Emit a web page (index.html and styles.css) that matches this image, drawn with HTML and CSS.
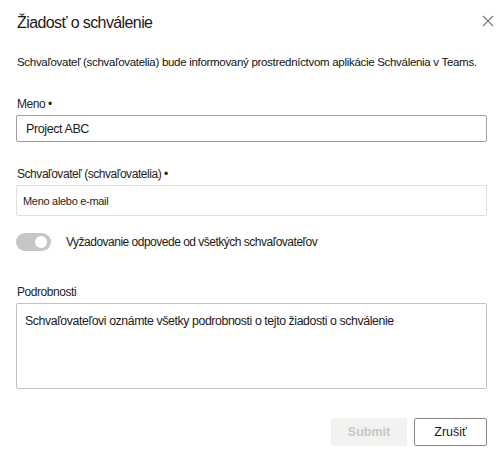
FILE: index.html
```html
<!DOCTYPE html>
<html lang="sk">
<head>
<meta charset="utf-8">
<link rel="stylesheet" href="styles.css">
</head>
<body>
<div class="dialog">
  <div class="header">
    <h1 class="title">Žiadosť o schválenie</h1>
    <button class="close" aria-label="Zavrieť">
      <svg width="12" height="12" viewBox="0 0 12 12"><path d="M1 1 L11 11 M11 1 L1 11" stroke="#777" stroke-width="1.1" fill="none"/></svg>
    </button>
  </div>
  <p class="desc">Schvaľovateľ (schvaľovatelia) bude informovaný prostredníctvom aplikácie Schválenia v Teams.</p>

  <div class="field field-name">
    <label class="label">Meno •</label>
    <div class="input input-dark">Project ABC</div>
  </div>

  <div class="field field-approvers">
    <label class="label">Schvaľovateľ (schvaľovatelia) •</label>
    <div class="input input-light"><span class="placeholder">Meno alebo e-mail</span></div>
  </div>

  <div class="toggle-row">
    <span class="toggle"><span class="knob"></span></span>
    <span class="toggle-label">Vyžadovanie odpovede od všetkých schvaľovateľov</span>
  </div>

  <div class="field field-details">
    <label class="label">Podrobnosti</label>
    <div class="textarea">Schvaľovateľovi oznámte všetky podrobnosti o tejto žiadosti o schválenie</div>
  </div>

  <div class="actions">
    <button class="btn btn-submit">Submit</button>
    <button class="btn btn-cancel">Zrušiť</button>
  </div>
</div>
</body>
</html>
```

FILE: styles.css
```css
* { box-sizing: border-box; }
html, body { margin: 0; padding: 0; background: #fff; }
body {
  font-family: "Liberation Sans", Arial, sans-serif;
  color: #1b1a19;
  width: 500px;
  height: 455px;
  overflow: hidden;
}
.dialog {
  padding: 12px 13px 0 16px;
}
.header {
  display: flex;
  justify-content: space-between;
  align-items: flex-start;
}
.title {
  margin: 0;
  font-weight: normal;
  font-size: 16px;
  letter-spacing: -0.6px;
  line-height: 22px;
  padding-left: 1px;
  color: #1b1a19;
}
.close {
  border: 0;
  background: none;
  padding: 0;
  margin: 3px -7px 0 0;
  width: 12px;
  height: 12px;
  display: flex;
}
.desc {
  margin: 20px 0 0 1px;
  font-size: 11.5px;
  letter-spacing: -0.3px;
  line-height: 16px;
  white-space: nowrap;
  color: #111;
}
.field { display: flex; flex-direction: column; }
.label {
  font-size: 12px;
  letter-spacing: -0.45px;
  line-height: 16px;
  color: #252423;
  padding-left: 1px;
  margin-bottom: 3px;
}
.field-name { margin-top: 26px; }
.field-approvers { margin-top: 24px; }
.field-details { margin-top: 33px; }
.input {
  height: 27px;
  border: 1px solid #c3c1bf;
  border-radius: 2px;
  display: flex;
  align-items: center;
  padding-left: 9px;
  font-size: 12.5px;
  letter-spacing: -0.4px;
  color: #1b1a19;
}
.input-dark { border-color: #a19f9d; }
.input-light { height: 31px; border-color: #e1dfdd; padding-left: 6px; }
.placeholder {
  font-size: 11px;
  letter-spacing: -0.3px;
  color: #252423;
}
.toggle-row {
  display: flex;
  align-items: center;
  margin-top: 17px;
  height: 18px;
}
.toggle {
  width: 35px;
  height: 18px;
  border-radius: 9px;
  background: #c8c6c4;
  position: relative;
  flex: none;
}
.knob {
  position: absolute;
  right: 4px;
  top: 3px;
  width: 12px;
  height: 12px;
  border-radius: 50%;
  background: #fff;
}
.toggle-label {
  margin-left: 15px;
  font-size: 12px;
  letter-spacing: -0.5px;
  color: #1b1a19;
}
.textarea {
  height: 86px;
  border: 1px solid #c3c1bf;
  border-radius: 2px;
  padding: 9px 8px;
  font-size: 12.3px;
  letter-spacing: -0.4px;
  line-height: 16px;
  color: #1b1a19;
}
.actions {
  display: flex;
  justify-content: flex-end;
  gap: 7px;
  margin-top: 29px;
}
.btn {
  height: 28px;
  border-radius: 2px;
  font-family: "Liberation Sans", Arial, sans-serif;
  font-size: 12.5px;
  padding: 0;
}
.btn-submit {
  width: 76px;
  border: 0;
  background: #f3f2f1;
  color: #c8c6c4;
  font-weight: bold;
}
.btn-cancel {
  width: 73px;
  border: 1px solid #8a8886;
  background: #fff;
  color: #1b1a19;
}
```
